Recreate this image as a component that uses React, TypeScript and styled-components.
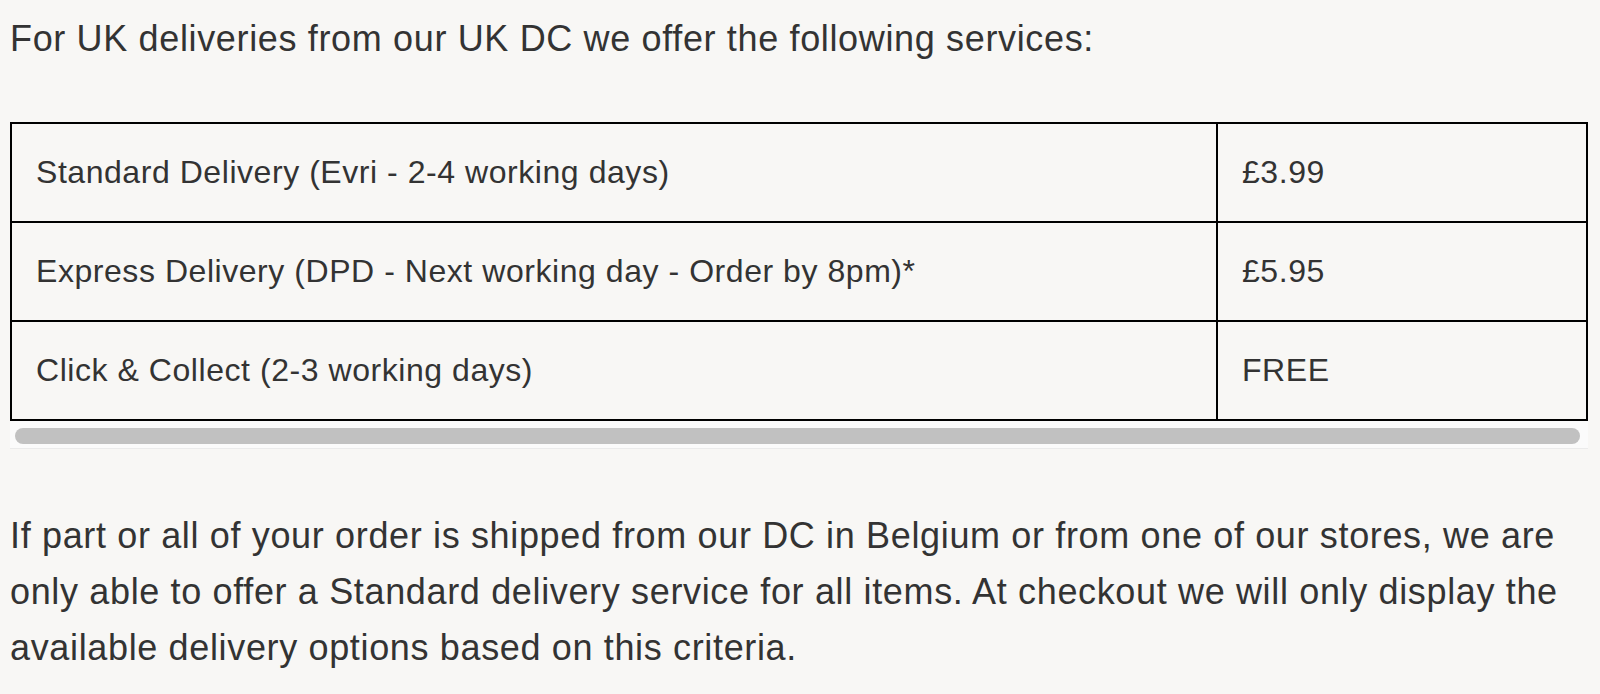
import React from "react";
import styled, { createGlobalStyle } from "styled-components";

const GlobalStyle = createGlobalStyle`
  html, body {
    margin: 0;
    padding: 0;
    background: #f8f7f5;
  }
  body {
    font-family: "Liberation Sans", Arial, sans-serif;
    color: #333333;
  }
`;

const Page = styled.main`
  padding: 11px 10px 0 10px;
  font-size: 36px;
  letter-spacing: 0.65px;
  line-height: 56px;
`;

const Text = styled.p<{ $top?: number }>`
  margin: ${(p) => p.$top ?? 0}px 0 0 0;
`;

const TableScroll = styled.div`
  margin-top: 55px;
  width: 1578px;
`;

const Table = styled.table`
  width: 1578px;
  border-collapse: collapse;
  border: 2px solid #000;
  font-size: 32px;
  letter-spacing: 0.55px;
`;

const Cell = styled.td<{ $width?: number }>`
  border: 2px solid #000;
  padding: 20px 24px;
  line-height: 57px;
  vertical-align: middle;
  ${(p) => (p.$width ? `width: ${p.$width}px;` : "")}
`;

const Track = styled.div`
  height: 28px;
  background: #fbfbfb;
  border-bottom: 1px solid #ebebeb;
  display: flex;
  align-items: flex-start;
  padding: 7px 8px 0 5px;
  box-sizing: border-box;
`;

const Thumb = styled.div`
  flex: 1;
  height: 16px;
  border-radius: 8px;
  background: #c1c1c1;
`;

const rows = [
  ["Standard Delivery (Evri - 2-4 working days)", "£3.99"],
  ["Express Delivery (DPD - Next working day - Order by 8pm)*", "£5.95"],
  ["Click & Collect (2-3 working days)", "FREE"],
];

export default function App() {
  return (
    <>
      <GlobalStyle />
      <Page>
        <Text>For UK deliveries from our UK DC we offer the following services:</Text>
        <TableScroll>
          <Table>
            <tbody>
              {rows.map(([name, price]) => (
                <tr key={name}>
                  <Cell>{name}</Cell>
                  <Cell $width={320}>{price}</Cell>
                </tr>
              ))}
            </tbody>
          </Table>
          <Track>
            <Thumb />
          </Track>
        </TableScroll>
        <Text $top={59}>
          If part or all of your order is shipped from our DC in Belgium or from one of our stores, we are
          only able to offer a Standard delivery service for all items. At checkout we will only display the
          available delivery options based on this criteria.
        </Text>
      </Page>
    </>
  );
}
